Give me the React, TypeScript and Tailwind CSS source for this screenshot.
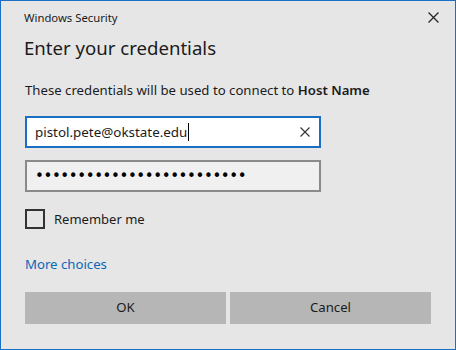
import { useState } from "react"

const font = { fontFamily: '"Noto Sans", "Open Sans", sans-serif' }

function CloseIcon({ size, color }: { size: number; color: string }) {
    return (
        <svg width={size} height={size} viewBox="0 0 10 10" fill="none">
            <path d="M0.5 0.5 L9.5 9.5 M9.5 0.5 L0.5 9.5" stroke={color} strokeWidth="1.1" />
        </svg>
    )
}

function App() {
    const [remember, setRemember] = useState(false)

    return (
        <div style={font} className="w-[456px] h-[350px] bg-[#e6e6e6] border border-[#1b6fc2] flex flex-col text-[#1b1b1b]">
            {/*-------- Title bar --------*/}
            <div className="flex justify-between items-start pl-[23px] pr-[16px] pt-[9px] h-[32px]">
                <span className="text-[11.3px] leading-[16px]">Windows Security</span>
                <span className="mt-[2px]"><CloseIcon size={11} color="#222" /></span>
            </div>

            {/*-------- Contents --------*/}
            <div className="flex flex-col px-[24px]">
                <h1 className="text-[18.6px] leading-[28px] -ml-[1px] mt-[1px]">Enter your credentials</h1>
                <p className="text-[13.2px] leading-[20px] mt-[18px]">
                    These credentials will be used to connect to <span className="font-semibold">Host Name</span>
                </p>

                {/* username box */}
                <div className="mt-[16px] w-[296px] h-[32px] bg-white border-2 border-[#1b6fc2] flex items-center pl-[8px] pr-[9px]">
                    <span className="text-[13.4px] leading-[20px] flex-1 flex items-center">
                        pistol.pete@okstate.edu
                        <span className="inline-block w-[1px] h-[18px] bg-black ml-[1px]"></span>
                    </span>
                    <CloseIcon size={10} color="#333" />
                </div>

                {/* password box */}
                <div className="mt-[12px] w-[296px] h-[32px] bg-[#f0f0f0] border-2 border-[#8a8a8a] flex items-center pl-[8px]">
                    <span className="text-[15px] leading-[20px] tracking-[-0.4px] text-black" style={{ fontFamily: '"DejaVu Sans", sans-serif' }}>
                        {"•".repeat(25)}
                    </span>
                </div>

                {/* remember me */}
                <label className="mt-[17px] flex items-center gap-[9px] cursor-pointer">
                    <button
                        onClick={() => setRemember(!remember)}
                        className="w-[20px] h-[20px] border-2 border-[#333] bg-transparent"
                    ></button>
                    <span className="text-[13px] leading-[20px]">Remember me</span>
                </label>

                <a className="mt-[25px] text-[13.2px] leading-[20px] text-[#0a66b7] w-fit">More choices</a>

                {/* buttons */}
                <div className="mt-[18px] flex gap-[4px]">
                    <button className="w-[201px] h-[32px] bg-[#b6b6b6] text-[13.2px]">OK</button>
                    <button className="w-[201px] h-[32px] bg-[#b6b6b6] text-[13.2px]">Cancel</button>
                </div>
            </div>
        </div>
    )
}

export default App
